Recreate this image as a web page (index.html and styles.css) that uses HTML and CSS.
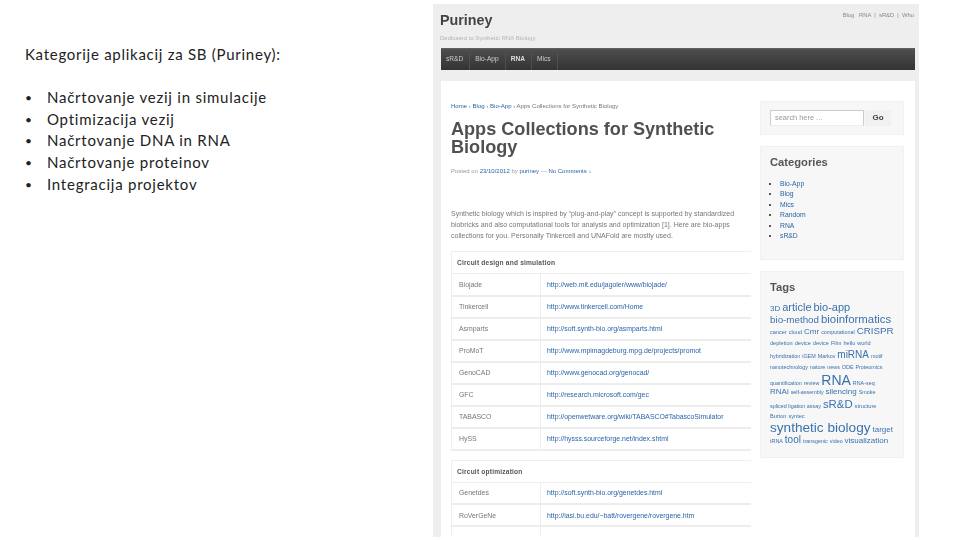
FILE: index.html
```html
<!DOCTYPE html>
<html lang="sl">
<head>
<meta charset="utf-8">
<title>Kategorije aplikacij za SB</title>
<link rel="stylesheet" href="styles.css">
</head>
<body>
<main class="slide">
  <section class="notes">
    <h1 class="notes-title">Kategorije aplikacij za SB (Puriney):</h1>
    <ul class="notes-list">
      <li>Načrtovanje vezij in simulacije</li>
      <li>Optimizacija vezij</li>
      <li>Načrtovanje DNA in RNA</li>
      <li>Načrtovanje proteinov</li>
      <li>Integracija projektov</li>
    </ul>
  </section>
  <section class="shot">
    <header class="site-head">
      <div>
        <div class="brand">Puriney</div>
        <div class="tagline">Dedicated to Synthetic RNA Biology</div>
      </div>
      <div class="top-links">Blog &nbsp; RNA &nbsp;|&nbsp; sR&amp;D &nbsp;|&nbsp; Who</div>
    </header>
    <nav class="nav">
      <a>sR&amp;D</a><a>Bio-App</a><a class="active">RNA</a><a>Mics</a>
    </nav>
    <div class="page">
      <article class="post">
        <div class="crumbs"><a>Home</a> › <a>Blog</a> › <a>Bio-App</a> › Apps Collections for Synthetic Biology</div>
        <h2 class="post-title">Apps Collections for Synthetic Biology</h2>
        <div class="meta">Posted on <a>23/10/2012</a> by <a>puriney</a> — <a>No Comments ↓</a></div>
        <p class="intro">Synthetic biology which is inspired by “plug-and-play” concept is supported by standardized biobricks and also computational tools for analysis and optimization [1]. Here are bio-apps collections for you. Personally Tinkercell and UNAFold are mostly used.</p>
        <table class="apps">
          <colgroup><col class="col-name"><col class="col-url"></colgroup>
          <tr><th colspan="2">Circuit design and simulation</th></tr>
          <tr><td>Biojade</td><td><a>http://web.mit.edu/jagoler/www/biojade/</a></td></tr>
          <tr><td>Tinkercell</td><td><a>http://www.tinkercell.com/Home</a></td></tr>
          <tr><td>Asmparts</td><td><a>http://soft.synth-bio.org/asmparts.html</a></td></tr>
          <tr><td>ProMoT</td><td><a>http://www.mpimagdeburg.mpg.de/projects/promot</a></td></tr>
          <tr><td>GenoCAD</td><td><a>http://www.genocad.org/genocad/</a></td></tr>
          <tr><td>GFC</td><td><a>http://research.microsoft.com/gec</a></td></tr>
          <tr><td>TABASCO</td><td><a>http://openwetware.org/wiki/TABASCO#TabascoSimulator</a></td></tr>
          <tr><td>HySS</td><td><a>http://hysss.sourceforge.net/index.shtml</a></td></tr>
        </table>
        <table class="apps apps-second">
          <colgroup><col class="col-name"><col class="col-url"></colgroup>
          <tr><th colspan="2">Circuit optimization</th></tr>
          <tr><td>Genetdes</td><td><a>http://soft.synth-bio.org/genetdes.html</a></td></tr>
          <tr><td>RoVerGeNe</td><td><a>http://iasi.bu.edu/~batt/rovergene/rovergene.htm</a></td></tr>
          <tr><td></td><td></td></tr>
        </table>
      </article>
      <aside class="side">
        <div class="widget widget-search">
          <span class="search-input">search here ...</span>
          <span class="search-go">Go</span>
        </div>
        <div class="widget widget-cats">
          <h3 class="widget-title">Categories</h3>
          <ul class="cats">
            <li><a>Bio-App</a></li>
            <li><a>Blog</a></li>
            <li><a>Mics</a></li>
            <li><a>Random</a></li>
            <li><a>RNA</a></li>
            <li><a>sR&amp;D</a></li>
          </ul>
        </div>
        <div class="widget widget-tags">
          <h3 class="widget-title">Tags</h3>
          <div class="cloud">
            <div class="cl"><span class="t8">3D</span> <span class="t12">article</span> <span class="t12">bio-app</span></div>
            <div class="cl"><span class="t11">bio-method</span> <span class="t13">bioinformatics</span></div>
            <div class="cl"><span class="t6">cancer</span> <span class="t6">cloud</span> <span class="t8">Cmr</span> <span class="t5">computational</span> <span class="t11">CRISPR</span></div>
            <div class="cl"><span class="t6">depletion</span> <span class="t6">device</span> <span class="t6">device</span> <span class="t6">Film</span> <span class="t6">hello</span> <span class="t6">world</span></div>
            <div class="cl"><span class="t5">hybridization</span> <span class="t5">iGEM</span> <span class="t5">Markov</span> <span class="t10">miRNA</span> <span class="t5">motif</span></div>
            <div class="cl"><span class="t5">nanotechnology</span> <span class="t5">nature</span> <span class="t5">news</span> <span class="t5">ODE</span> <span class="t5">Proteomics</span></div>
            <div class="cl"><span class="t5">quantification</span> <span class="t5">review</span> <span class="t14">RNA</span> <span class="t5">RNA-seq</span></div>
            <div class="cl"><span class="t8">RNAi</span> <span class="t5">self-assembly</span> <span class="t8">silencing</span> <span class="t5">Smoke</span></div>
            <div class="cl"><span class="t5">spliced ligation assay</span> <span class="t13">sR&amp;D</span> <span class="t6">structure</span></div>
            <div class="cl"><span class="t6">Burton</span> <span class="t6">syntec</span></div>
            <div class="cl"><span class="t15">synthetic biology</span> <span class="t8">target</span></div>
            <div class="cl"><span class="t5">tRNA</span> <span class="t10">tool</span> <span class="t5">transgenic</span> <span class="t5">video</span> <span class="t8">visualization</span></div>
          </div>
        </div>
      </aside>
    </div>
  </section>
</main>
</body>
</html>
```
FILE: styles.css
```css
* { box-sizing: border-box; }
html, body { margin: 0; padding: 0; background: #fff; }
body { width: 960px; height: 540px; overflow: hidden; font-family: "Liberation Sans", Arial, sans-serif; }
a { color: #2a64a8; text-decoration: none; }

.slide { display: flex; align-items: flex-start; width: 960px; height: 540px; padding: 4px 41px 0 25px; }

.notes { width: 408px; padding-top: 40px; font-family: Lato, "Liberation Sans", sans-serif; color: #222; }
.notes-title { margin: 0 0 23px; font-size: 15px; line-height: 20px; font-weight: 400; letter-spacing: 0.73px; }
.notes-list { margin: 0; padding: 0; list-style: none; font-size: 15px; line-height: 21.7px; letter-spacing: 0.76px; }
.notes-list li { display: flex; }
.notes-list li::before { content: "•"; width: 22px; flex: none; font-size: 12px; }

.shot { width: 486px; height: 533px; overflow: hidden; background: #eeeeee; padding: 0 4px 0 8px; filter: blur(0.45px); }

.site-head { display: flex; justify-content: space-between; height: 44px; }
.brand { margin-top: 8px; margin-left: -1px; font-size: 14.3px; line-height: 17px; font-weight: 700; color: #444; }
.tagline { margin-top: 5px; margin-left: -1px; font-size: 6px; line-height: 8px; color: #b5b5b5; }
.top-links { margin-top: 7px; padding-right: 1px; font-size: 5.8px; line-height: 8px; color: #888; }

.nav { display: flex; height: 22px; background: linear-gradient(#666 0, #4d4d4d 8%, #333 100%); align-items: center; }
.nav a { display: block; height: 22px; padding: 0 6px 0 5px; border-right: 1px solid #505050; font-size: 6.6px; line-height: 22px; color: #ccc; }
.nav a.active { font-weight: 700; color: #ddd; }

.page { display: flex; height: 456px; margin-top: 11px; padding: 21px 11px 0 10px; background: #fff; }
.post { width: 309px; flex: none; }
.crumbs { font-size: 6.05px; line-height: 8px; color: #777; }
.post-title { margin: 10px 0 0; width: 285px; font-size: 18.1px; line-height: 18px; font-weight: 700; color: #505050; }
.meta { margin-top: 11px; font-size: 6px; line-height: 8px; color: #999; }
.intro { margin: 33px 0 0; width: 292px; font-size: 7.03px; line-height: 11px; color: #777; }

.apps { width: 299px; margin-top: 10px; border-collapse: collapse; table-layout: fixed; font-size: 6.9px; border-top: 1px solid #eee; }
.col-name { width: 89px; }
.col-url { width: 210px; }
.apps th { height: 22px; padding: 0 5px; text-align: left; font-size: 6.6px; font-weight: 700; color: #555; letter-spacing: 0.2px; border-left: 1px solid #eee; border-bottom: 1px solid #eee; }
.apps td { height: 22px; padding: 0 0 0 7px; color: #777; border-bottom: 2px solid #ededed; border-left: 1px solid #eee; white-space: nowrap; overflow: hidden; }
.apps td:last-child { padding-left: 6px; }
.apps td a { color: #2a64a8; }
.apps-second { margin-top: 9px; }

.side { width: 144px; flex: none; display: flex; flex-direction: column; gap: 11px; margin-top: -1px; }
.widget { background: #f7f7f7; border: 1px solid #f1f1f1; padding: 0 9px; }
.widget-search { height: 34px; display: flex; align-items: center; }
.search-input { width: 94px; height: 16px; background: #fff; border: 1px solid #ccc; border-bottom-color: #eee; font-size: 7.4px; line-height: 14px; padding-left: 4px; color: #999; }
.search-go { width: 26px; height: 16px; margin-left: 1px; background: #f1f1f1; font-size: 8px; font-weight: 700; line-height: 16px; text-align: center; color: #444; }
.widget-title { margin: 0; font-size: 11.2px; line-height: 14px; font-weight: 700; color: #555; }
.widget-cats { height: 114px; padding-top: 8px; }
.cats { margin: 10px 0 0; padding: 0 0 0 10px; font-size: 6.8px; line-height: 10.4px; color: #555; list-style: square; }
.widget-tags { height: 187px; padding-top: 8px; }
.cloud { margin-top: 7px; font-size: 7px; white-space: nowrap; }
.cl { height: 12.1px; line-height: 12.1px; }
.cl span { color: #3a72ae; }
.t5 { font-size: 5.4px; }
.t6 { font-size: 5.6px; }
.t8 { font-size: 8px; }
.t10 { font-size: 10px; }
.t11 { font-size: 9.8px; }
.t12 { font-size: 11px; }
.t13 { font-size: 11.4px; }
.t14 { font-size: 14px; }
.t15 { font-size: 13.6px; }
```
